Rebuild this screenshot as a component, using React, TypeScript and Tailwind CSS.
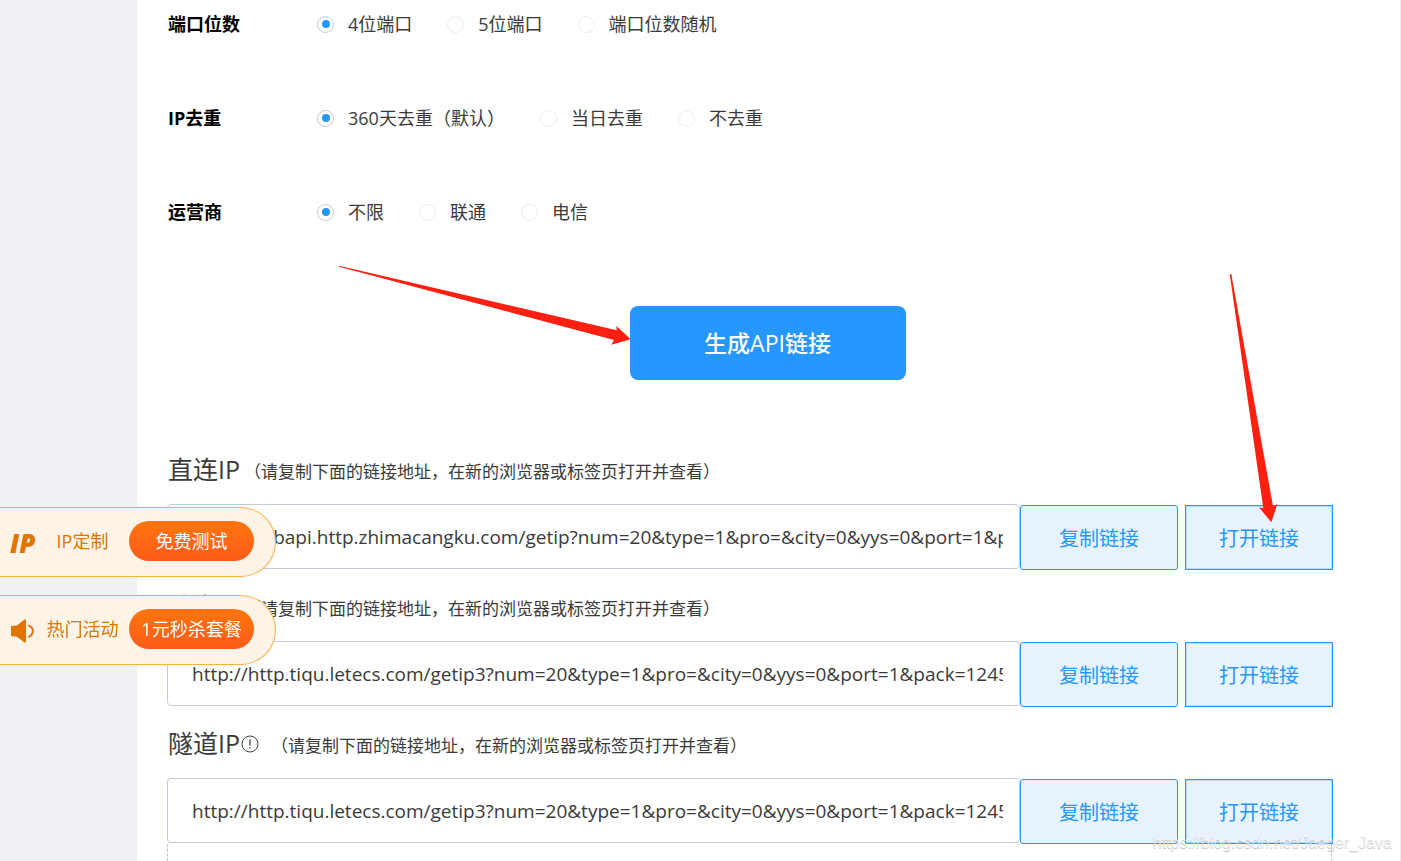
import React, { useState } from "react";

type RadioRow = { name: string; label: string; options: string[] };

const radioRows: RadioRow[] = [
  { name: "port", label: "端口位数", options: ["4位端口", "5位端口", "端口位数随机"] },
  { name: "dedupe", label: "IP去重", options: ["360天去重（默认）", "当日去重", "不去重"] },
  { name: "carrier", label: "运营商", options: ["不限", "联通", "电信"] },
];

const HINT = "（请复制下面的链接地址，在新的浏览器或标签页打开并查看）";

const links = [
  {
    id: "direct",
    title: "直连IP",
    info: false,
    url: "http://webapi.http.zhimacangku.com/getip?num=20&type=1&pro=&city=0&yys=0&port=1&pack=124510",
  },
  {
    id: "exclusive",
    title: "独享IP",
    info: false,
    url: "http://http.tiqu.letecs.com/getip3?num=20&type=1&pro=&city=0&yys=0&port=1&pack=124510",
  },
  {
    id: "tunnel",
    title: "隧道IP",
    info: true,
    url: "http://http.tiqu.letecs.com/getip3?num=20&type=1&pro=&city=0&yys=0&port=1&pack=124510",
  },
];

function RadioGroup({ row }: { row: RadioRow }) {
  const [value, setValue] = useState(0);
  return (
    <div role="radiogroup" aria-label={row.label} className="flex h-[94px] items-center">
      <span className="w-[149px] shrink-0 text-lg font-bold text-black">{row.label}</span>
      <div className="flex items-center gap-[35px]">
        {row.options.map((option, i) => (
          <label key={option} className="flex items-center gap-[14px] text-lg whitespace-nowrap">
            <input
              type="radio"
              name={row.name}
              checked={value === i}
              onChange={() => setValue(i)}
              className="grid size-[17px] shrink-0 appearance-none place-items-center rounded-full border border-[#ebebf7] bg-white checked:border-[#c3cad8] checked:before:size-2 checked:before:rounded-full checked:before:bg-[#2697ff] checked:before:content-['']"
            />
            {option}
          </label>
        ))}
      </div>
    </div>
  );
}

function InfoIcon() {
  return (
    <svg viewBox="0 0 18 18" className="size-[18px]" fill="none" stroke="#444" aria-hidden="true">
      <circle cx="9" cy="9" r="8" />
      <path d="M9 4.5v6M9 12v1.6" strokeWidth="1.3" />
    </svg>
  );
}

function LinkBlock({ link }: { link: (typeof links)[number] }) {
  return (
    <section className="flex flex-col">
      <div className="flex h-[71px] items-center pt-0.5 pl-px text-[#3a3a3a]">
        <label htmlFor={link.id} className="text-[25px] whitespace-nowrap">
          {link.title}
        </label>
        {link.info && (
          <span className="mr-2 ml-px">
            <InfoIcon />
          </span>
        )}
        <span className="ml-1 pt-1 text-[17px] whitespace-nowrap">{HINT}</span>
      </div>
      <div className="flex h-[66px]">
        <input
          id={link.id}
          type="text"
          readOnly
          defaultValue={link.url}
          className="h-[65px] min-w-0 flex-1 rounded border border-[#c5cad6] bg-white pr-4 pl-6 text-[19px] text-[#3a3a3a] outline-none"
        />
        <button
          type="button"
          className="mt-px w-[158px] shrink-0 rounded-[3px] border border-[#2697ff] bg-[#e7f3fc] pt-[3px] text-xl text-[#2697ff]"
        >
          复制链接
        </button>
        <button
          type="button"
          className="mt-px ml-[7px] w-[148px] shrink-0 border border-[#2697ff] bg-[#e9f3fd] pt-[3px] text-xl text-[#2697ff] inset-ring inset-ring-[#b9dcff]"
        >
          打开链接
        </button>
      </div>
    </section>
  );
}

function SpeakerIcon() {
  return (
    <svg viewBox="0 0 24 24" className="size-6" aria-hidden="true">
      <path
        d="M2.5 6.8H6.500L14.600.6Q16 0 16 1.600V22.400Q16 24 14.600 23.400L6.500 17.400H2.500Q1 17.400 1 16V8.200Q1 6.800 2.500 6.800Z"
        fill="#e07400"
      />
      <path d="M19 6.600Q22.800 8 22.800 12T19 17.600" fill="none" stroke="#e07400" strokeWidth="2" strokeLinecap="round" />
    </svg>
  );
}

function Promo({ icon, label, action }: { icon: React.ReactNode; label: string; action: string }) {
  return (
    <div className="flex h-[70px] w-[276px] items-center rounded-r-full border border-l-0 border-[#ffae45] bg-[#fef3e7] pb-0.5 pl-[10px]">
      <span className="flex w-[26px] shrink-0 items-center pt-1">{icon}</span>
      <span className="flex-1 text-center text-lg whitespace-nowrap text-[#e07400]">{label}</span>
      <button
        type="button"
        className="mr-[21px] h-10 w-[125px] shrink-0 rounded-full bg-linear-to-b from-[#ff750a] to-[#ff5b1a] text-lg whitespace-nowrap text-white"
      >
        {action}
      </button>
    </div>
  );
}

export default function App() {
  return (
    <div className="relative flex min-h-screen overflow-hidden bg-white font-['Open_Sans','Noto_Sans_CJK_SC',sans-serif] text-[#3a3a3a]">
      <aside className="w-[137px] shrink-0 bg-[#f0f1f6]" />

      <main className="flex min-w-0 flex-1 flex-col border-r border-[#ececf0] pr-[67px] pl-[30px]">
        <div className="-mt-[23px] flex flex-col pl-px">
          {radioRows.map((row) => (
            <RadioGroup key={row.name} row={row} />
          ))}
        </div>

        <div className="mt-[47px] flex justify-center pl-[35px]">
          <div className="relative">
            <button type="button" className="h-[74px] w-[276px] rounded-lg bg-[#2697ff] text-[23px] font-medium text-white">
              生成API链接
            </button>
            <svg
              viewBox="0 0 292 80"
              className="pointer-events-none absolute top-[-41px] right-[275px] h-[80px] w-[292px]"
              aria-hidden="true"
            >
              <path d="M0 .7L277.700 65.300L277.300 61L291.700 74.300L272.300 79.700L275 75L0 1.700Z" fill="#ff2012" />
            </svg>
          </div>
        </div>

        <div className="mt-[53px] flex flex-col">
          {links.map((link) => (
            <LinkBlock key={link.id} link={link} />
          ))}
        </div>
        <div className="mr-px min-h-4 flex-1 border-x border-dashed border-[#c4c4c4]" />
      </main>

      <svg
        viewBox="0 0 50 250"
        className="pointer-events-none absolute top-[273px] right-[122px] h-[250px] w-[50px]"
        aria-hidden="true"
      >
        <path d="M.7 1H2.300L44 233L48.300 231.300L42.300 249.300L30 234.300L34.300 235.300Z" fill="#ff2012" />
      </svg>

      <div className="fixed top-[507px] left-0 flex flex-col gap-[18px]">
        <Promo
          icon={<span className="text-[26px] leading-none font-extrabold text-[#e07400] italic">IP</span>}
          label="IP定制"
          action="免费测试"
        />
        <Promo icon={<SpeakerIcon />} label="热门活动" action="1元秒杀套餐" />
      </div>

      <span className="pointer-events-none absolute right-[9px] bottom-[6px] font-['Liberation_Sans',sans-serif] text-base text-white/70 [text-shadow:0_1px_1px_rgb(0_0_0/0.25)]">
        https://blog.csdn.net/Jaeger_Java
      </span>
    </div>
  );
}
